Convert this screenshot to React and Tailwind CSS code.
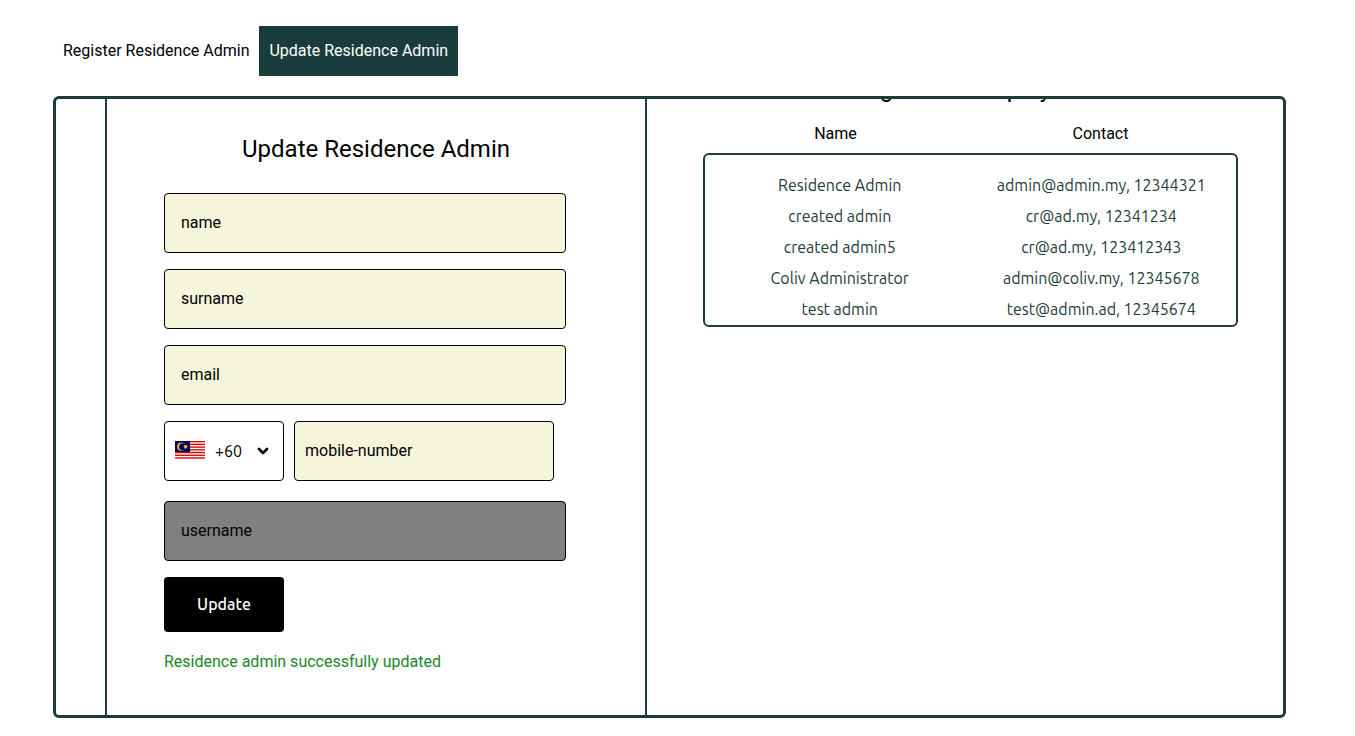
import { ChevronDown } from "lucide-react";

const admins = [
  ["Residence Admin", "admin@admin.my, 12344321"],
  ["created admin", "cr@ad.my, 12341234"],
  ["created admin5", "cr@ad.my, 123412343"],
  ["Coliv Administrator", "admin@coliv.my, 12345678"],
  ["test admin", "test@admin.ad, 12345674"],
];

const fieldBase =
  "h-15 rounded border border-black pb-[2px] text-base text-black placeholder:text-black placeholder:opacity-100 outline-none";

function Field({ name, disabled }) {
  return (
    <input
      type="text"
      name={name}
      aria-label={name}
      placeholder={name}
      disabled={disabled}
      className={`${fieldBase} w-full px-4 ${disabled ? "bg-[#808080]" : "bg-[#f5f5dc]"}`}
    />
  );
}

function MalaysiaFlag() {
  return (
    <svg viewBox="0 0 30 19" className="h-[19px] w-[30px] shrink-0" aria-hidden="true">
      <rect width="30" height="19" fill="#fff" />
      {[0, 1, 2, 3, 4, 5, 6].map((i) => (
        <rect key={i} y={(i * 38) / 14} width="30" height={19 / 14} fill="#d00" />
      ))}
      <rect width="15" height="11" fill="#006" />
      <circle cx="6.3" cy="5.7" r="4.1" fill="#fc0" />
      <circle cx="7.6" cy="5.7" r="3.5" fill="#006" />
      <path
        d="M10.6 3.4l.5 1.2 1.2-.5-.5 1.1 1.2.5-1.2.5.5 1.2-1.2-.5-.5 1.2-.5-1.2-1.2.5.5-1.2-1.2-.5 1.2-.5-.5-1.1 1.2.5z"
        fill="#fc0"
      />
    </svg>
  );
}

export default function App() {
  return (
    <div className="flex h-screen flex-col bg-white pt-[26px] pr-[69px] pb-[18px] pl-[53px] font-['Roboto',sans-serif] text-base text-black">
      <nav className="mb-5 flex">
        <button type="button" className="h-[50px] px-[10px]">
          Register Residence Admin
        </button>
        <button type="button" className="h-[50px] bg-[#1a3c3c] px-[10px] text-white">
          Update Residence Admin
        </button>
      </nav>

      <main className="flex min-h-0 flex-1 overflow-hidden rounded-md border-3 border-[#1a3c3c]">
        <div className="w-[51px] shrink-0 border-r-2 border-[#1a3c3c]" />

        <section className="w-[540px] shrink-0 border-r-2 border-[#1a3c3c] px-[57px] pt-8">
          <h1 className="mb-[26px] text-center text-2xl leading-9">Update Residence Admin</h1>
          <form className="flex w-[402px] flex-col" onSubmit={(e) => e.preventDefault()}>
            <div className="flex flex-col gap-4">
              <Field name="name" />
              <Field name="surname" />
              <Field name="email" />
              <div className="flex gap-[10px]">
                <button
                  type="button"
                  aria-label="Country code +60"
                  className="flex h-15 w-30 items-center rounded border border-black bg-white px-[10px] pb-px font-['Ubuntu','Noto_Sans',sans-serif]"
                >
                  <MalaysiaFlag />
                  <span className="ml-[10px] w-10 text-left">+60</span>
                  <ChevronDown size={16} strokeWidth={4} />
                </button>
                <input
                  type="tel"
                  name="mobile-number"
                  aria-label="mobile-number"
                  placeholder="mobile-number"
                  className={`${fieldBase} w-[260px] bg-[#f5f5dc] px-[10px]`}
                />
              </div>
            </div>
            <div className="mt-5 mb-4">
              <Field name="username" disabled />
            </div>
            <button
              type="submit"
              className="h-[55px] w-30 rounded bg-black pb-[2px] font-['Ubuntu','Noto_Sans',sans-serif] text-base font-medium text-white"
            >
              Update
            </button>
            <p className="mt-[18px] text-[#1c862c]">Residence admin successfully updated</p>
          </form>
        </section>

        <section className="flex min-w-0 flex-1 flex-col justify-start pr-[45px] pl-14">
          <div className="h-[54px]">
            <h2 className="-mt-6 text-center text-2xl leading-7">Registered Employees</h2>
            <div className="mt-[19px] grid grid-cols-2 pr-[5px] text-center leading-6">
              <span>Name</span>
              <span>Contact</span>
            </div>
          </div>
          <div className="rounded-md border-2 border-[#1a3c3c] px-1 pt-[15px]">
            <table className="w-full table-fixed text-center font-['Ubuntu','Noto_Sans',sans-serif] leading-[31px] text-[#1a3c3c]">
              <tbody>
                {admins.map(([name, contact]) => (
                  <tr key={contact}>
                    <td className="p-0">{name}</td>
                    <td className="p-0">{contact}</td>
                  </tr>
                ))}
              </tbody>
            </table>
          </div>
        </section>
      </main>
    </div>
  );
}
